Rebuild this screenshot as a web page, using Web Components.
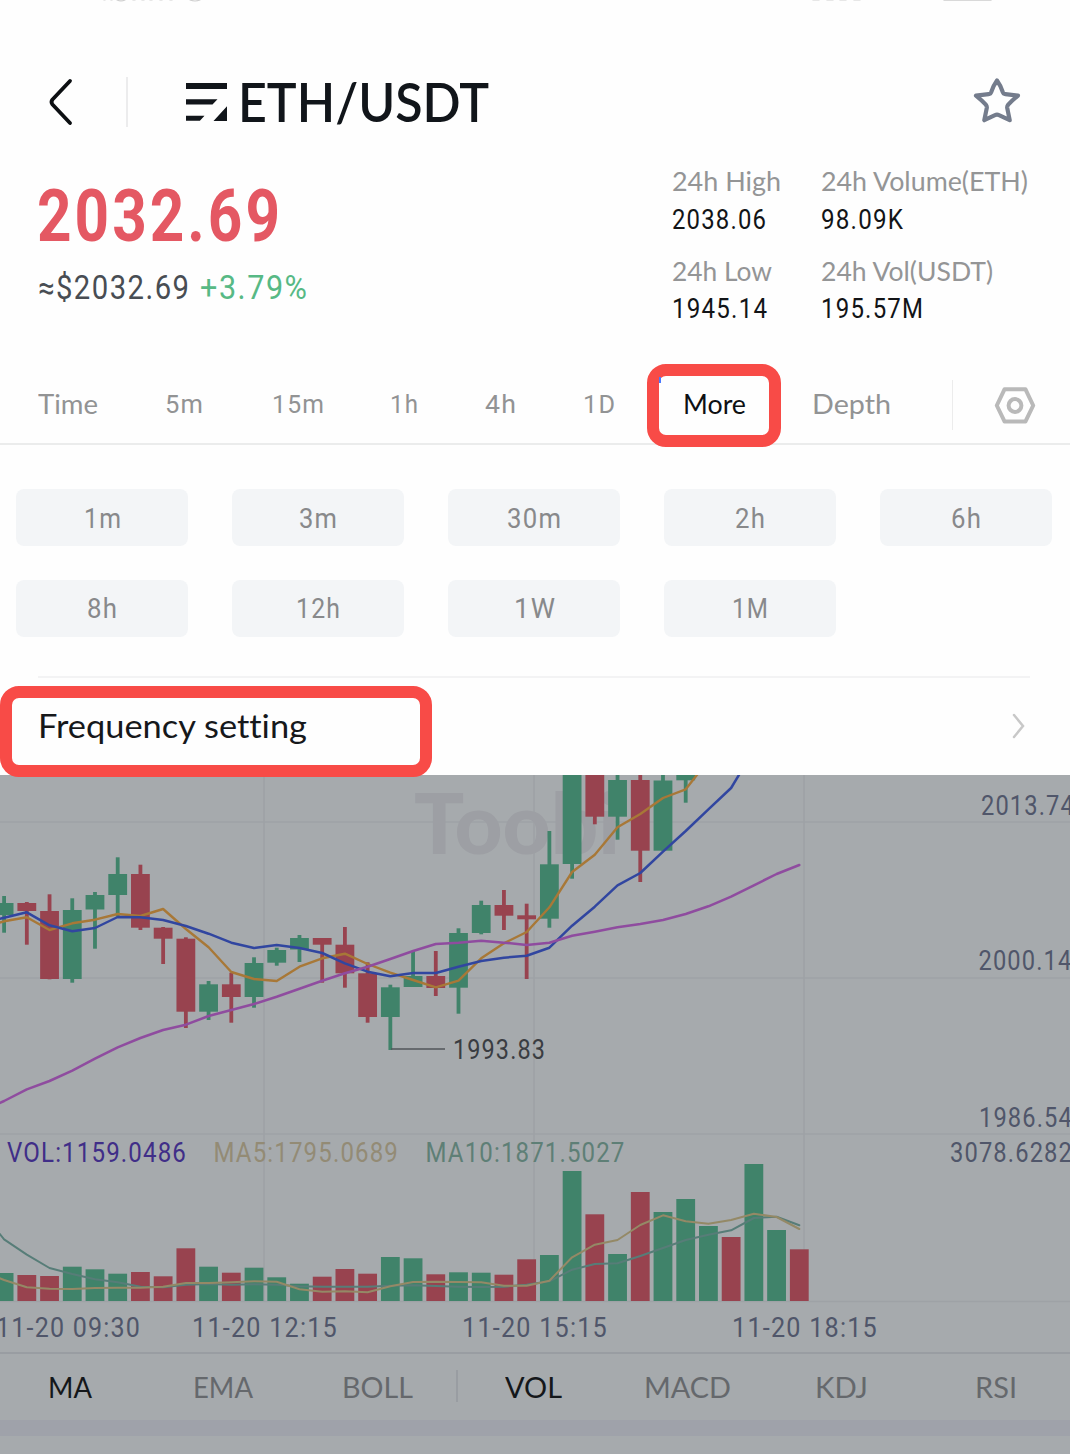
<!DOCTYPE html>
<html lang="en">
<head>
<meta charset="utf-8">
<title>ETH/USDT</title>
<style>
  html, body { margin: 0; padding: 0; }
  body {
    width: 1070px; height: 1454px; overflow: hidden; background: #fefefe;
    --word: Lato, "Open Sans", sans-serif;
    --num: Roboto, "Liberation Sans", sans-serif;
    font-family: var(--word);
  }
</style>
</head>
<body>
<market-page></market-page>

<script>
(function () {
  'use strict';

  /* ============ shared helpers ============ */
  function mount(el, html) {
    el.attachShadow({ mode: 'open' }).innerHTML = html;
  }

  // text of a fixed width: fit(text, width, size, 'num' | 'word', weight)
  function fit(text, width, size, face, weight) {
    return `<fit-text width="${width}" size="${size}" face="${face || 'word'}" weight="${weight || 400}">${text}</fit-text>`;
  }

  /* ============ <fit-text> condenses its text to a width ============ */
  class FitText extends HTMLElement {
    connectedCallback() {
      if (this.shadowRoot) return;
      const w = Number(this.getAttribute('width'));
      const size = Number(this.getAttribute('size'));
      const face = this.getAttribute('face');
      const space = face === 'num' ? size * 0.05 : 0;
      mount(this, `
        <style>
          :host { display: block; width: ${w}px; height: ${size}px; flex: none; }
          span { display: inline-block; white-space: nowrap; transform-origin: 0 50%; letter-spacing: ${space}px;
                 font: ${this.getAttribute('weight')} ${size}px/${size}px var(--${face});
                 font-variant-ligatures: none; }
        </style>
        <span><slot></slot></span>`);
      const span = this.shadowRoot.querySelector('span');
      const natural = span.getBoundingClientRect().width - space;
      if (natural > 0) span.style.transform = `scaleX(${w / natural})`;
    }
  }

  /* ============ <status-edge> bottom edge of the status bar ============ */
  class StatusEdge extends HTMLElement {
    connectedCallback() {
      mount(this, `
        <style>:host { display: block; height: 4px; } svg { display: block; }</style>
        <svg width="1070" height="4" fill="none" stroke="#cfcfcf" stroke-width="1.2" stroke-linecap="round">
          <path d="M104 0h1M111 0h1M117 0q4 1.8 8 0M133 0h2M142 0h2M150 0h2M160 0h2M170 0h2M190 0q5 2 10 0"/>
          <path d="M813 0h6M827 0h6M840 0h6M854 0h6"/>
          <path d="M944 0h47" stroke="#b4b4b4"/>
        </svg>`);
    }
  }

  /* ============ <pair-header> ============ */
  class PairHeader extends HTMLElement {
    connectedCallback() {
      mount(this, `
        <style>
          :host { display: flex; align-items: center; height: 66px; margin-top: 65px; margin-bottom: 1px; }
          svg { display: block; flex: none; }
          .back { margin-left: 46px; }
          .rule { width: 2px; height: 50px; background: #ececed; margin-left: 50px; }
          .menu { margin-left: 58px; margin-top: -2px; }
          fit-text { margin-left: 10px; margin-top: -1px; color: #11151a; }
          .star { margin-left: auto; margin-right: 48px; margin-top: -4px; }
        </style>
        <svg class="back" width="30" height="50" fill="none" stroke="#0c0f12" stroke-width="3.8" stroke-linecap="round" stroke-linejoin="round">
          <path d="M24 4L6.5 22.5Q4.5 25 6.5 27.5L24 46"/>
        </svg>
        <span class="rule"></span>
        <svg class="menu" width="42" height="42" fill="#11151a">
          <path d="M0 3h41v6H0zM0 19.2h31.5l-5 5.4H0zM0 35.8h18.5l-4.6 5H0zM41 26.2V41H27.5z"/>
        </svg>
        ${fit('<slot></slot>', 251, 53, 'word', 600)}
        <svg class="star" width="50" height="50" fill="none" stroke="#747c8c" stroke-width="4.2" stroke-linejoin="round">
          <path d="M25 5.5Q29 11 30.8 17.2Q31.4 19 33.4 19.2L46 20.6Q40 25.5 36.2 29.6Q35 31 35.2 32.8L37.7 45.2L27 40.2Q25 39.2 23 40.2L12.3 45.2L14.8 32.8Q15 31 13.8 29.6Q10 25.5 4 20.6L16.6 19.2Q18.6 19 19.2 17.2Q21 11 25 5.5Z"/>
        </svg>`);
    }
  }

  /* ============ <stat-item> label over value ============ */
  class StatItem extends HTMLElement {
    connectedCallback() {
      const a = (n) => this.getAttribute(n);
      mount(this, `
        <style>
          :host { display: flex; flex-direction: column; gap: 11px; }
          .k { color: #949596; }
          .v { color: #121417; }
        </style>
        <div class="k">${fit(a('label'), a('lw'), 27.5)}</div>
        <div class="v">${fit(a('value'), a('vw'), 27.5, 'num')}</div>`);
    }
  }

  /* ============ <price-summary> ============ */
  class PriceSummary extends HTMLElement {
    connectedCallback() {
      mount(this, `
        <style>
          :host { display: flex; height: 219px; }
          .left { width: 634px; padding: 45px 0 0 37px; box-sizing: border-box; }
          .last { color: #e45863; }
          .sub { display: flex; gap: 11px; margin-top: 18.5px; margin-left: 1px; color: #484d53; }
          .up { color: #57b985; }
          .stats { display: grid; grid-template-columns: 149.5px auto; row-gap: 23.5px; align-content: start; padding: 31px 0 0 37.5px; }
        </style>
        <div class="left">
          <div class="last">${fit('2032.69', 243, 72, 'num', 700)}</div>
          <div class="sub">
            ${fit('≈$2032.69', 151, 32.5, 'num')}
            <span class="up">${fit('+3.79%', 107, 32.5, 'num')}</span>
          </div>
        </div>
        <div class="stats">
          <stat-item label="24h High" lw="109" value="2038.06" vw="94"></stat-item>
          <stat-item label="24h Volume(ETH)" lw="207" value="98.09K" vw="82"></stat-item>
          <stat-item label="24h Low" lw="100" value="1945.14" vw="95"></stat-item>
          <stat-item label="24h Vol(USDT)" lw="172" value="195.57M" vw="102"></stat-item>
        </div>`);
    }
  }

  /* ============ <mark-frame> red highlight frame ============ */
  class MarkFrame extends HTMLElement {
    connectedCallback() {
      mount(this, `
        <style>
          :host { display: block; position: absolute; box-sizing: border-box; z-index: 2;
                  border: 12.5px solid #f84b47; border-radius: 19px; pointer-events: none; }
        </style>`);
    }
  }

  /* ============ <interval-tabs> ============ */
  class IntervalTabs extends HTMLElement {
    connectedCallback() {
      mount(this, `
        <style>
          :host { display: grid; position: relative; height: 90px; box-sizing: border-box; align-items: center;
                  grid-template-columns: 127px 107px 118px 95px 98px 100px 129px 139.5px 42px 1fr;
                  padding: 10px 0 0 38px; border-bottom: 2px solid #ebecec; color: #929394; }
          fit-text[face="word"] { margin-top: -2px; }
          .on { color: #0e1013; }
          .rule { width: 1.5px; height: 50px; background: #ececec; margin-top: 2px; }
          .hex { display: block; margin-top: 2px; }
          mark-frame { left: 646.5px; top: 8.5px; width: 134.5px; height: 83.5px; }
          .tick { position: absolute; left: 659px; top: 22px; width: 2px; height: 6px; background: #4a78ff; z-index: 3; }
        </style>
        ${fit('Time', 60, 27)}
        ${fit('5m', 38, 26.5, 'num')}
        ${fit('15m', 52, 26.5, 'num')}
        ${fit('1h', 28, 26.5, 'num')}
        ${fit('4h', 31, 26.5, 'num')}
        ${fit('1D', 32, 26.5, 'num')}
        <span class="on">${fit('More', 63, 27)}</span>
        ${fit('Depth', 79, 27)}
        <span class="rule"></span>
        <svg class="hex" width="42" height="40" fill="none" stroke="#b9b9b9" stroke-width="4" stroke-linejoin="round">
          <path d="M10.6 4.2h20.8L39.2 20.5L31.4 36.6H10.6L2.8 20.5Z"/>
          <circle cx="21" cy="20.5" r="6.4"/>
        </svg>
        <mark-frame></mark-frame><span class="tick"></span>`);
    }
  }

  /* ============ <interval-chip> ============ */
  class IntervalChip extends HTMLElement {
    connectedCallback() {
      mount(this, `
        <style>
          :host { display: flex; justify-content: center; align-items: center; height: 57px; box-sizing: border-box;
                  padding-top: 2px; border-radius: 8px; background: #f3f5f7; color: #88898b; }
        </style>
        ${fit('<slot></slot>', this.getAttribute('w'), 27.5, 'num')}`);
    }
  }

  /* ============ <interval-panel> ============ */
  class IntervalPanel extends HTMLElement {
    connectedCallback() {
      const chips = [['1m', 37], ['3m', 38], ['30m', 54], ['2h', 30], ['6h', 30],
                     ['8h', 30], ['12h', 44], ['1W', 41], ['1M', 36]];
      mount(this, `
        <style>
          :host { display: grid; grid-template-columns: repeat(5, 172px); gap: 33.5px 44px; padding: 44px 16px 39px; }
        </style>
        ${chips.map(c => `<interval-chip w="${c[1]}">${c[0]}</interval-chip>`).join('')}`);
    }
  }

  /* ============ <setting-row> ============ */
  class SettingRow extends HTMLElement {
    connectedCallback() {
      mount(this, `
        <style>
          :host { display: block; position: relative; height: 99px; }
          .row { display: flex; justify-content: space-between; align-items: center; height: 97px;
                 margin: 0 40px 0 38px; border-top: 2px solid #f3f3f4; color: #16181b; }
          svg { margin-right: 4px; }
          mark-frame { left: -.5px; top: 10.5px; width: 432px; height: 91px; }
        </style>
        <div class="row">
          ${fit('<slot></slot>', 269, 32)}
          <svg width="16" height="28" fill="none" stroke="#c8c8c8" stroke-width="2.5" stroke-linecap="round"><path d="M4 3L13 14L4 25"/></svg>
        </div>
        <mark-frame></mark-frame>`);
    }
  }

  /* ============ <kline-chart> candles, averages and volume ============ */
  const STEP = 22.72, FIRST = 4.1, BAR = 18.8, FLOOR = 1301;
  const GREEN = '#40836a', RED = '#98434f';

  // direction, body top, body bottom, wick top, wick bottom
  const CANDLES = [
    ['g', 903, 915, 896, 932.7], ['r', 903, 911, 902, 944.7], ['r', 911, 979, 894.3, 979.3],
    ['g', 910, 979, 898.3, 982.7], ['g', 895, 909.5, 892, 948.7], ['g', 874, 895, 857.3, 916.7],
    ['r', 874, 927.7, 864.7, 930], ['r', 927.7, 938.7, 927, 964], ['r', 938.7, 1011.7, 937.3, 1028],
    ['g', 984.3, 1011.7, 981, 1020], ['r', 984.3, 997, 972.7, 1022.7], ['g', 963, 997, 957.3, 1007.7],
    ['g', 950, 962.7, 947.7, 965.7], ['g', 938, 949.5, 935, 962], ['r', 938, 944.7, 938, 982.7],
    ['r', 944.7, 973.3, 927, 987.7], ['r', 973.3, 1017, 962.3, 1022.7], ['g', 987.3, 1017, 984.7, 1050],
    ['g', 976, 987, 951, 987], ['r', 976, 988, 951, 996], ['g', 933, 987.7, 928.3, 1013.7],
    ['g', 905, 933, 900.7, 934.3], ['r', 905, 915.7, 890, 930], ['r', 915.3, 919.3, 903.7, 979],
    ['g', 864.3, 918.7, 831, 927.7], ['g', 770, 864, 770, 878.7], ['r', 770, 816.7, 770, 824.3],
    ['g', 780, 816.7, 770, 839.7], ['r', 780, 850.7, 770, 882], ['g', 780.5, 850.7, 770, 850.7],
    ['g', 770, 780.3, 770, 802.7]
  ];
  const VOLUME = [
    'g1273', 'r1275', 'r1276', 'g1266.7', 'g1269.3', 'g1273.7', 'r1272', 'r1276.3', 'r1248.3', 'g1266.7', 'r1272.7',
    'g1267.7', 'g1277.3', 'g1283.7', 'r1276.7', 'r1269', 'r1273.7', 'g1257', 'g1258.3', 'r1274.3', 'g1272.3',
    'g1272.7', 'r1274.7', 'r1259.3', 'g1255', 'g1171', 'r1214.3', 'g1254', 'r1192', 'g1212', 'g1199', 'g1226',
    'r1237', 'g1164', 'g1230', 'r1249.3'
  ];
  const MA5 = [921.3, 917.3, 930, 923.3, 919.7, 914, 916, 909, 929, 947.3, 972, 979, 981, 966.7, 958.3, 953.7, 964,
    972.7, 980, 987.3, 980.7, 958.3, 943.3, 932, 907.3, 872, 854.7, 827.3, 814, 798, 789.3];
  const MA10 = [917.7, 912.3, 925.3, 931.3, 928, 917, 917.3, 920, 926, 933.7, 942.7, 948, 945, 948, 953, 963.3, 971.7,
    976.3, 973, 973, 966.7, 961, 957.7, 955.7, 947.7, 925.7, 906.7, 885.3, 873, 851.7, 831, 809.3, 788];
  const MA30 = [1101, 1089.3, 1081, 1070.7, 1058.7, 1047.3, 1038, 1030, 1024.7, 1016, 1010, 1004, 996.7, 988.7, 980.7,
    973.3, 966.7, 959, 951, 944, 942.7, 940.7, 942.7, 945, 942.7, 935.7, 931.7, 927.3, 924, 920, 914, 906.3, 896.7,
    885.3, 874, 865];
  const VMA5 = [1280, 1287.3, 1288.7, 1289, 1288, 1287.7, 1287.7, 1286.7, 1283, 1283, 1282.3, 1281.3, 1281.7, 1289.3,
    1291.7, 1291.3, 1292.3, 1286.3, 1282, 1281.7, 1282, 1282.3, 1285.7, 1285.7, 1280.7, 1257.3, 1244.7, 1240, 1225,
    1215.3, 1221.3, 1223.7, 1220, 1213.7, 1217, 1229];
  const VMA10 = [1239.3, 1254.7, 1268, 1274, 1279.3, 1282.3, 1286.7, 1287.3, 1284.7, 1284, 1284.7, 1284.3, 1284.7,
    1286.3, 1286.7, 1286.7, 1286.7, 1285.7, 1285.3, 1286, 1286.7, 1287, 1286.7, 1284.7, 1281.3, 1269.7, 1264, 1263.3,
    1256, 1248, 1240, 1234.7, 1230.3, 1218, 1216.7, 1225.3];

  const cx = (i) => FIRST + STEP * i;

  function line(ys, start, end, color, width) {
    let pts = `-1,${start} ` + ys.map((y, i) => `${cx(i).toFixed(1)},${y}`).join(' ');
    if (end) pts += ` ${end}`;
    return `<polyline points="${pts}" fill="none" stroke="${color}" stroke-width="${width}" stroke-linejoin="round" stroke-linecap="round"/>`;
  }

  function label(text, x, y, width, color) {
    return `<text x="${x}" y="${y}" textLength="${width}" lengthAdjust="spacingAndGlyphs" fill="${color}">${text}</text>`;
  }

  class KlineChart extends HTMLElement {
    connectedCallback() {
      const candle = ([d, t, b, wt, wb], i) => `<g fill="${d === 'g' ? GREEN : RED}">
        <rect x="${cx(i) - 1.9}" y="${wt}" width="3.8" height="${wb - wt}"/>
        <rect x="${cx(i) - BAR / 2}" y="${t}" width="${BAR}" height="${b - t}"/></g>`;
      const bar = (v, i) => `<rect x="${cx(i) - BAR / 2}" y="${v.slice(1)}" width="${BAR}" height="${FLOOR - v.slice(1)}" fill="${v[0] === 'g' ? GREEN : RED}"/>`;
      const axis = '#50566a';
      mount(this, `
        <style>
          :host { display: block; height: 577px; overflow: hidden; background: #a6aaad; }
          svg { display: block; font: 27.3px var(--num); letter-spacing: 1.3px; }
          .logo { font: 900 84px var(--word); letter-spacing: 0; }
        </style>
        <svg width="1070" height="577" viewBox="0 775 1070 577">
          <path d="M0 822H1070M0 978H1070M0 1134H1070M0 1301.5H1070M264 775V1301M534 775V1301M804 775V1301" stroke="#9ea2a6" stroke-width="1.6"/>
          <text class="logo" x="414" y="854" textLength="206" lengthAdjust="spacingAndGlyphs" fill="#9d9fa4">Toobi</text>
          ${CANDLES.map(candle).join('')}
          ${line(MA5, 922.7, '697.7,774', '#a87837', 2.4)}
          ${line(MA10, 919, '739.5,774', '#3146a0', 2.5)}
          ${line(MA30, 1103.3, '', '#8f4c9f', 2.5)}
          <path d="M391 1049H445" stroke="#50545a" stroke-width="1.4"/>
          ${label('1993.83', 453, 1059, 93, '#3a3d42')}
          ${VOLUME.map(bar).join('')}
          ${line(VMA10, 1233, '', '#577d78', 2)}
          ${line(VMA5, 1278, '', '#948966', 2)}
          ${label('2013.74', 981, 814.5, 94, axis)}
          ${label('2000.14', 978.5, 970, 94, axis)}
          ${label('1986.54', 979, 1126.5, 94, axis)}
          ${label('3078.6282', 950, 1161.7, 123, axis)}
          ${label('VOL:1159.0486', 7, 1162, 180, '#402e88')}
          ${label('MA5:1795.0689', 213.5, 1162, 185.5, '#938b75')}
          ${label('MA10:1871.5027', 425.5, 1162, 200, '#5e7f76')}
          ${label('11-20 09:30', -4, 1337, 145, axis)}
          ${label('11-20 12:15', 192, 1337, 146, axis)}
          ${label('11-20 15:15', 462, 1337, 146, axis)}
          ${label('11-20 18:15', 732, 1337, 146, axis)}
        </svg>`);
    }
  }

  /* ============ <indicator-tabs> ============ */
  class IndicatorTabs extends HTMLElement {
    connectedCallback() {
      mount(this, `
        <style>
          :host { display: grid; grid-template-columns: 145px 148.5px 114.5px 49px 139px 170.5px 160px 1fr;
                  align-items: center; height: 68.5px; box-sizing: border-box; padding: 1px 0 0 48px;
                  border-top: 2px solid #999da2; background: #a6aaad; color: #65686c; }
          .on { color: #14171a; }
          .rule { width: 2px; height: 32px; background: #999da2; margin-top: -2px; }
        </style>
        <span class="on">${fit('MA', 44, 28.5)}</span>
        ${fit('EMA', 60, 28.5)}
        ${fit('BOLL', 71, 28.5)}
        <span class="rule"></span>
        <span class="on">${fit('VOL', 57, 28.5)}</span>
        ${fit('MACD', 87, 28.5)}
        ${fit('KDJ', 53, 28.5)}
        ${fit('RSI', 42, 28.5)}`);
    }
  }

  /* ============ <market-page> ============ */
  class MarketPage extends HTMLElement {
    connectedCallback() {
      mount(this, `
        <style>
          :host { display: flex; flex-direction: column; width: 1070px; height: 1454px; overflow: hidden; }
          .band { height: 15.5px; background: #9fa2aa; }
          .rest { flex: 1; background: #a6aaad; }
        </style>
        <status-edge></status-edge>
        <pair-header>ETH/USDT</pair-header>
        <price-summary></price-summary>
        <interval-tabs></interval-tabs>
        <interval-panel></interval-panel>
        <setting-row>Frequency setting</setting-row>
        <kline-chart></kline-chart>
        <indicator-tabs></indicator-tabs>
        <div class="band"></div>
        <div class="rest"></div>`);
    }
  }

  const parts = {
    'fit-text': FitText, 'status-edge': StatusEdge, 'pair-header': PairHeader, 'stat-item': StatItem,
    'price-summary': PriceSummary, 'mark-frame': MarkFrame, 'interval-tabs': IntervalTabs,
    'interval-chip': IntervalChip, 'interval-panel': IntervalPanel, 'setting-row': SettingRow,
    'kline-chart': KlineChart, 'indicator-tabs': IndicatorTabs, 'market-page': MarketPage
  };
  Object.keys(parts).forEach(name => customElements.define(name, parts[name]));
})();
</script>
</body>
</html>
